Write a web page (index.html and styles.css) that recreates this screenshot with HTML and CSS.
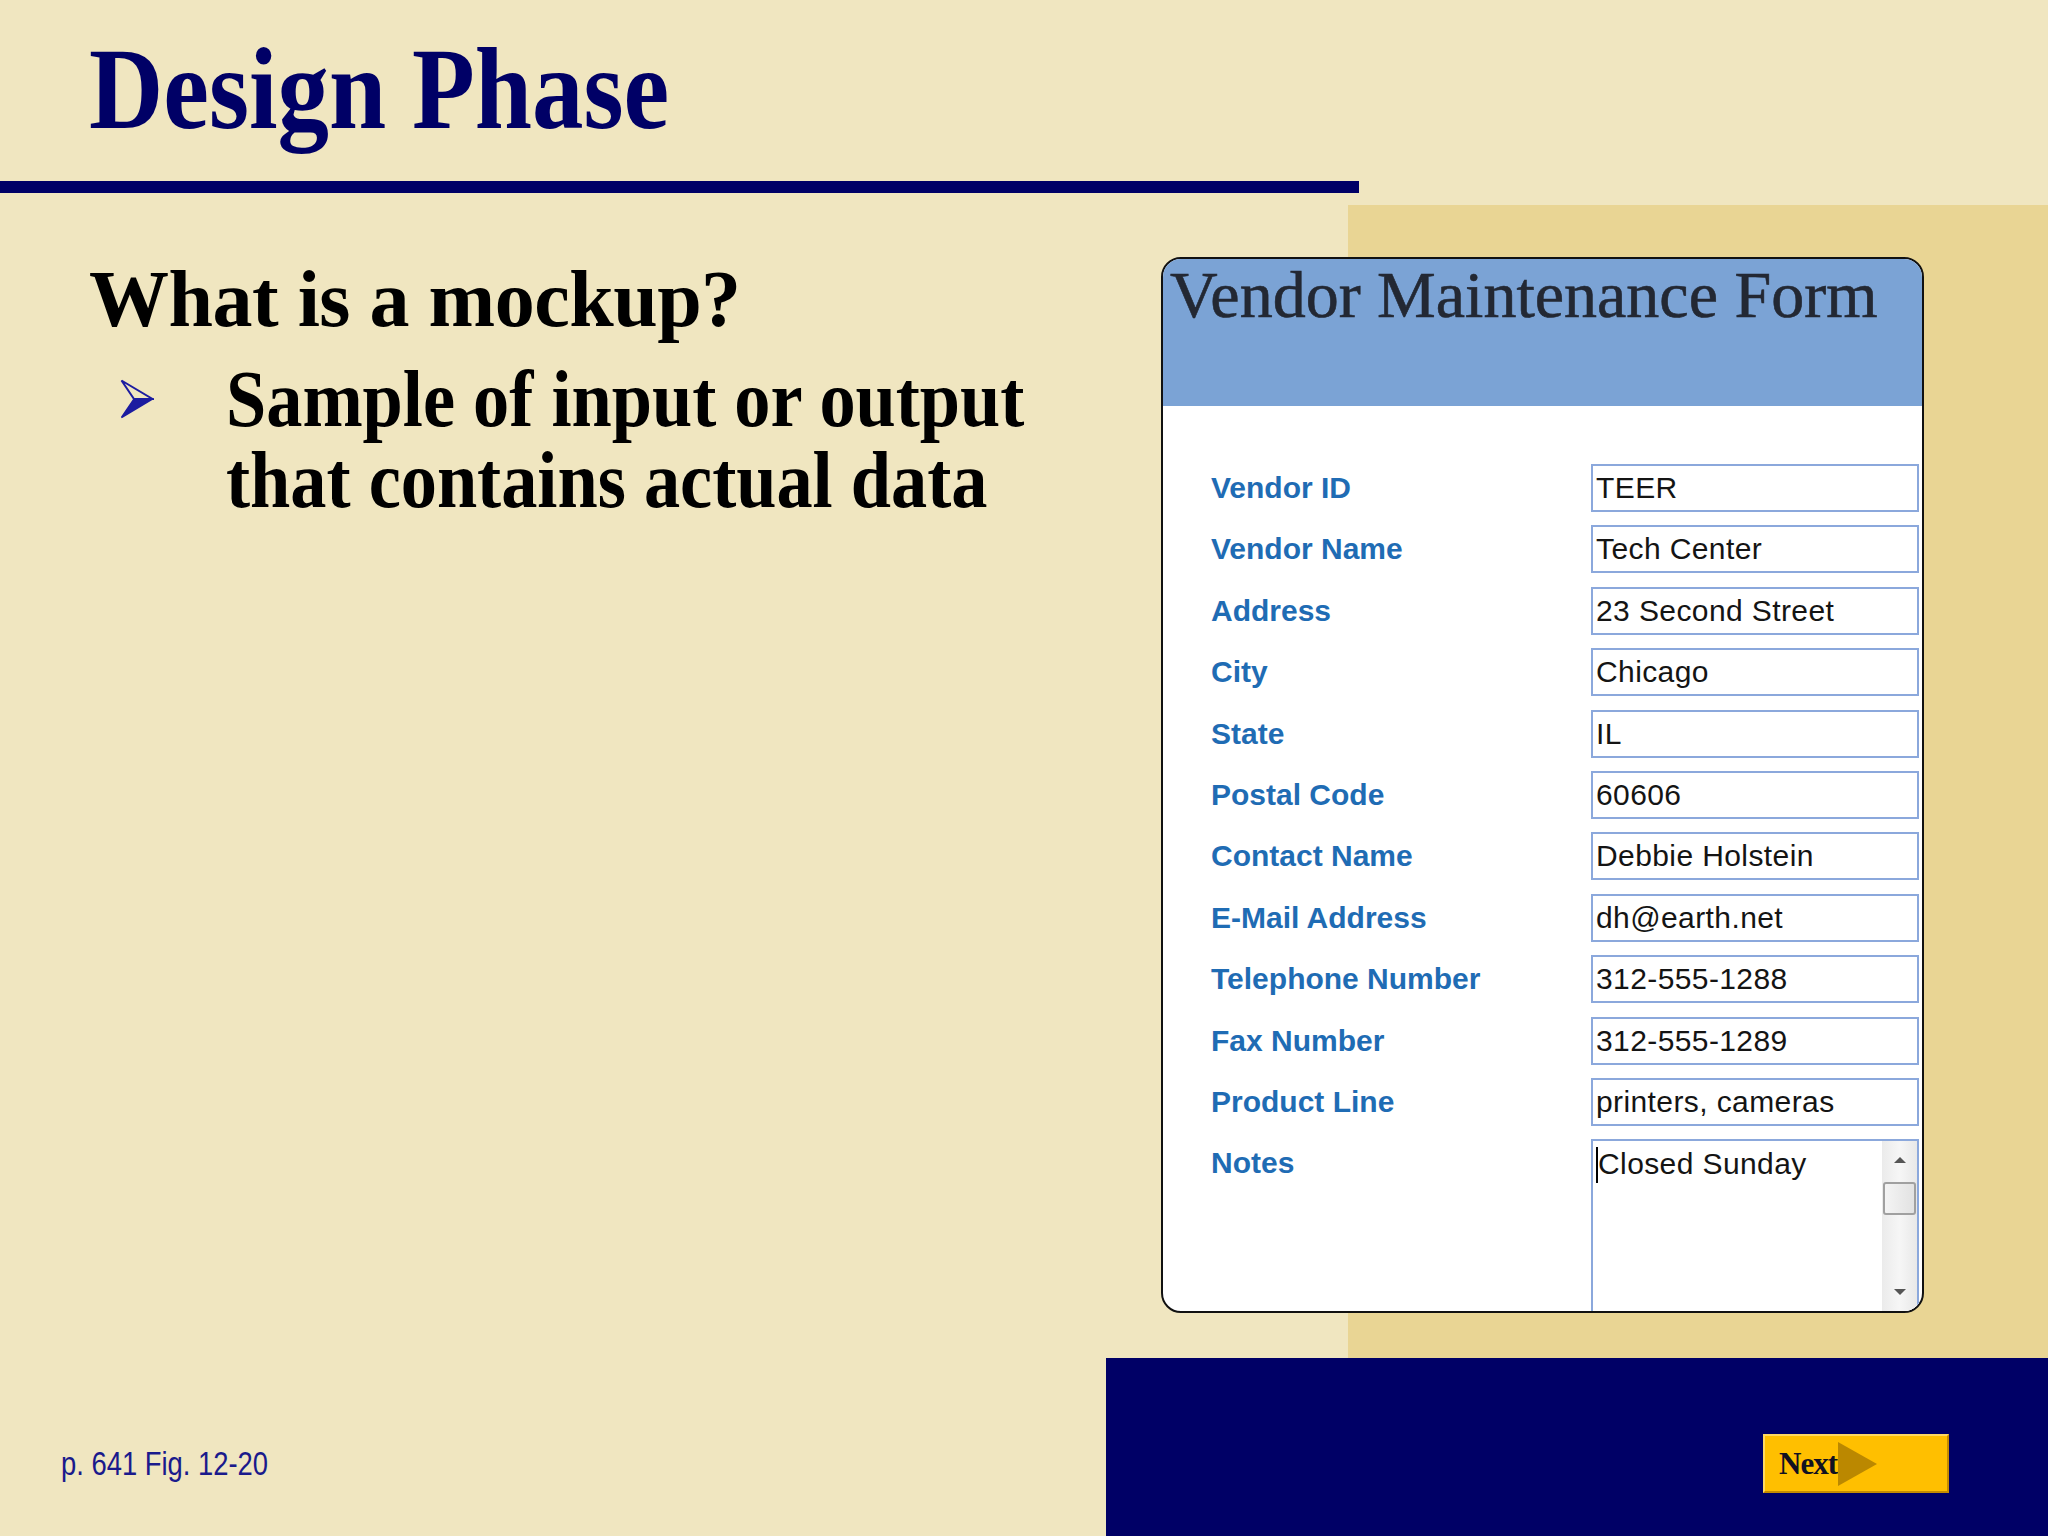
FILE: index.html
```html
<!DOCTYPE html>
<html lang="en">
<head>
<meta charset="utf-8">
<title>Design Phase</title>
<link rel="stylesheet" href="styles.css">
</head>
<body>
<div class="slide">
  <header class="head">
    <h1 class="title">Design Phase</h1>
    <div class="rule"></div>
  </header>
  <main class="main">
    <section class="text-col">
      <h2 class="question">What is a mockup?</h2>
      <div class="bullet">
        <svg class="arrow" width="34" height="40" viewBox="0 0 34 40">
          <polygon points="1.5,1.5 32.5,20 14,20" fill="none" stroke="#1c1ca0" stroke-width="2" stroke-linejoin="miter"/>
          <polygon points="14,20 32.5,20 1.5,38.5" fill="#1c1ca0" stroke="#1c1ca0" stroke-width="1.5"/>
        </svg>
        <p class="bullet-text">Sample of input or output<br>that contains actual data</p>
      </div>
    </section>
    <section class="form">
      <div class="form-head">Vendor Maintenance Form</div>
      <div class="form-body">
        <div class="label">Vendor ID</div><div class="field">TEER</div>
        <div class="label">Vendor Name</div><div class="field">Tech Center</div>
        <div class="label">Address</div><div class="field">23 Second Street</div>
        <div class="label">City</div><div class="field">Chicago</div>
        <div class="label">State</div><div class="field">IL</div>
        <div class="label">Postal Code</div><div class="field">60606</div>
        <div class="label">Contact Name</div><div class="field">Debbie Holstein</div>
        <div class="label">E-Mail Address</div><div class="field">dh@earth.net</div>
        <div class="label">Telephone Number</div><div class="field">312-555-1288</div>
        <div class="label">Fax Number</div><div class="field">312-555-1289</div>
        <div class="label">Product Line</div><div class="field">printers, cameras</div>
        <div class="label">Notes</div>
        <div class="field notes">
          <div class="notes-text"><span class="caret"></span>Closed Sunday</div>
          <div class="scroll">
            <div class="scroll-btn"><span class="tri-up"></span></div>
            <div class="thumb"></div>
            <div class="track"></div>
            <div class="scroll-btn"><span class="tri-down"></span></div>
          </div>
        </div>
      </div>
    </section>
  </main>
  <footer class="foot">
    <span class="caption">p. 641 Fig. 12-20</span>
    <div class="next-btn">
      <span class="next-label">Next</span>
      <svg class="next-arrow" width="39" height="44" viewBox="0 0 39 44"><polygon points="0,0 39,22 0,44" fill="#bb8800"/></svg>
    </div>
  </footer>
</div>
</body>
</html>
```
FILE: styles.css
```css
html, body {
  margin: 0;
  padding: 0;
}

.slide {
  width: 2048px;
  height: 1536px;
  overflow: hidden;
  background:
    linear-gradient(#000066, #000066) 1106px 1358px / 942px 178px no-repeat,
    linear-gradient(#e9d594, #e9d594) 1348px 205px / 700px 1153px no-repeat,
    #f0e6c0;
  font-family: "Liberation Serif", "Times New Roman", serif;
}

.head {
  padding: 31px 0 0 89px;
}

.title {
  margin: 0;
  font: bold 116px/1 "Liberation Serif", serif;
  color: #000066;
  white-space: nowrap;
  width: max-content;
  transform: scaleX(0.887);
  transform-origin: 0 0;
}

.rule {
  margin: 34px 0 0 -89px;
  width: 1359px;
  height: 12px;
  background: #000066;
}

.main {
  display: grid;
  grid-template-columns: 1161px 763px;
  align-items: start;
}

.text-col {
  padding: 56px 0 0 89px;
}

.question {
  margin: 0;
  font: bold 80px/100px "Liberation Serif", serif;
  letter-spacing: -0.5px;
  color: #000;
  white-space: nowrap;
}

.bullet {
  display: flex;
  align-items: flex-start;
  margin-top: 9.5px;
}

.arrow {
  flex: none;
  margin: 20.5px 0 0 31px;
}

.bullet-text {
  margin: 0 0 0 72px;
  font: bold 80px/81px "Liberation Serif", serif;
  color: #000;
  white-space: nowrap;
  transform: scaleX(0.904);
  transform-origin: 0 0;
}

.form {
  margin-top: 64px;
  height: 1056px;
  box-sizing: border-box;
  border: 2px solid #111;
  border-radius: 20px;
  overflow: hidden;
  background: #fff;
}

.form-head {
  height: 147px;
  box-sizing: border-box;
  padding: 3px 0 0 7px;
  background: #7ba3d5;
  font: 66px/1 "Liberation Serif", serif;
  color: #232833;
  white-space: nowrap;
  -webkit-text-stroke: 0.6px #232833;
}

.form-head-text {
  display: inline-block;
}

.form-body {
  height: 905px;
  box-sizing: border-box;
  overflow: hidden;
  padding: 58px 3px 0 48px;
  display: grid;
  grid-template-columns: 380px 328px;
  grid-auto-rows: 48px;
  row-gap: 13.4px;
  align-items: start;
}

.label {
  height: 48px;
  display: flex;
  align-items: center;
  font: bold 30px "Liberation Sans", Arial, sans-serif;
  color: #1f6cb4;
  white-space: nowrap;
}

.field {
  height: 48px;
  box-sizing: border-box;
  border: 2px solid #8ba8dc;
  padding-left: 3px;
  display: flex;
  align-items: center;
  font: 30px/1 "Liberation Sans", Arial, sans-serif;
  letter-spacing: 0.4px;
  color: #141414;
  white-space: nowrap;
  background: #fff;
}

.notes {
  height: 174px;
  align-items: stretch;
  padding-left: 0;
}

.notes-text {
  flex: 1;
  padding: 8px 0 0 3px;
  display: flex;
  align-items: flex-start;
}

.caret {
  display: inline-block;
  width: 2px;
  height: 36px;
  background: #000;
  margin: -2px 0 0 0;
}

.scroll {
  width: 35px;
  display: flex;
  flex-direction: column;
  background: linear-gradient(90deg, #ebebeb, #f6f6f6 50%, #e8e8e8);
}

.scroll-btn {
  height: 38px;
  display: flex;
  align-items: center;
  justify-content: center;
}

.tri-up {
  width: 0;
  height: 0;
  border-left: 6px solid transparent;
  border-right: 6px solid transparent;
  border-bottom: 6px solid #555;
}

.tri-down {
  width: 0;
  height: 0;
  border-left: 6px solid transparent;
  border-right: 6px solid transparent;
  border-top: 6px solid #555;
}

.thumb {
  margin: 3px 1px 0 1px;
  height: 33px;
  box-sizing: border-box;
  border: 2px solid #a0a0a0;
  border-radius: 3px;
  background: linear-gradient(90deg, #f4f4f4, #e2e2e2);
}

.track {
  flex: 1;
}

.foot {
  margin-top: 121px;
  height: 59px;
  display: flex;
  justify-content: space-between;
  align-items: center;
  padding: 0 99px 0 61px;
}

.caption {
  display: inline-block;
  margin-top: 1px;
  font: 33px "Liberation Sans", Arial, sans-serif;
  color: #1a1a8c;
  white-space: nowrap;
  transform: scaleX(0.83);
  transform-origin: 0 50%;
}

.next-btn {
  width: 186px;
  height: 59px;
  box-sizing: border-box;
  border: 2px solid;
  border-color: #ffd860 #c48c00 #c48c00 #ffd860;
  background: #ffbf00;
  display: flex;
  align-items: center;
  padding-left: 14px;
}

.next-label {
  font: bold 31px/1 "Liberation Serif", serif;
  letter-spacing: -1px;
  color: #111122;
}

.next-arrow {
  flex: none;
  margin-left: 1px;
}
```
